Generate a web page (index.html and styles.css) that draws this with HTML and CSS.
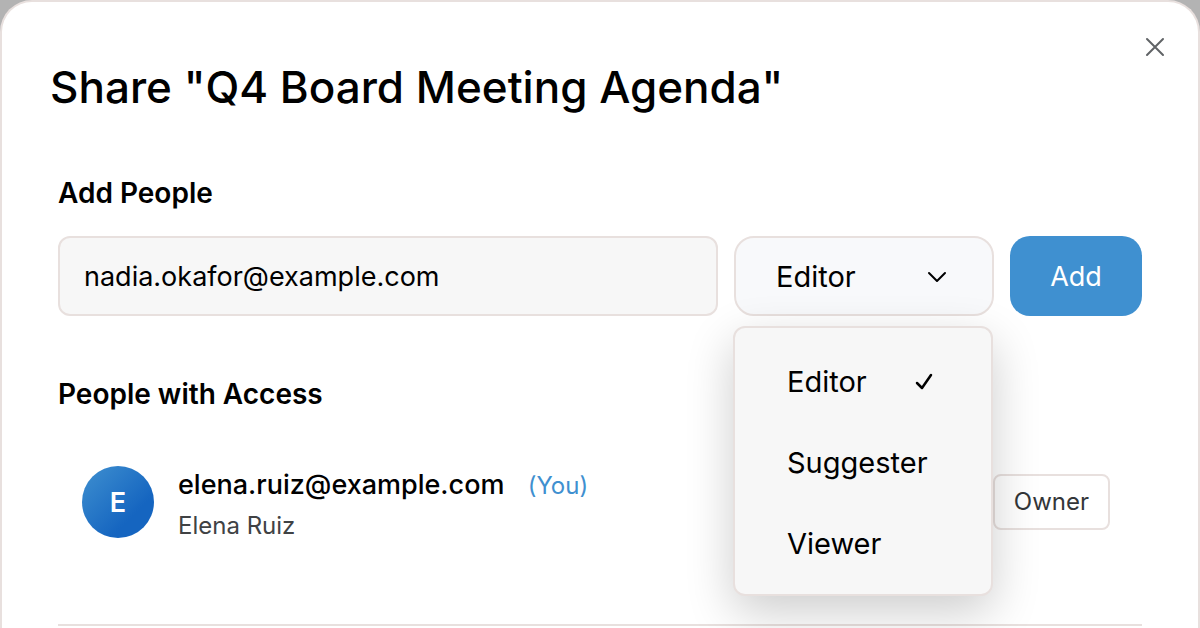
FILE: index.html
```
<!DOCTYPE html>
<html lang="en">
<head>
  <meta charset="utf-8">
  <meta name="viewport" content="width=device-width, initial-scale=1.0">
  <title>Share "Q4 Board Meeting Agenda"</title>
  <link rel="stylesheet" href="styles.css">
</head>
<body>
  <div class="modal" role="dialog" aria-labelledby="shareTitle">
    <button type="button" class="close" aria-label="Close">
      <svg width="20" height="20" viewBox="0 0 20 20"><path d="M2 2L18 18M18 2L2 18"/></svg>
    </button>
    <h1 id="shareTitle">Share "Q4 Board Meeting Agenda"</h1>

    <form class="section">
      <h2><label for="email">Add People</label></h2>
      <div class="add-row">
        <input type="text" id="email" class="email" value="nadia.okafor@example.com">
        <div class="role">
          <select id="role" aria-label="Role">
            <option selected>Editor</option>
            <option>Suggester</option>
            <option>Viewer</option>
          </select>
          <svg class="chevron" width="20" height="12" viewBox="0 0 20 12"><path d="M2 2L10 10L18 2"/></svg>
          <ul class="menu" role="listbox" aria-label="Role options">
            <li role="option" aria-selected="true">
              Editor
              <svg class="check" width="18" height="18" viewBox="0 0 18 18"><path d="M2 10L7 15L16 2"/></svg>
            </li>
            <li role="option">Suggester</li>
            <li role="option">Viewer</li>
          </ul>
        </div>
        <button type="button" class="add">Add</button>
      </div>
    </form>

    <div class="section access">
      <h2>People with Access</h2>
      <div class="person">
        <div class="avatar">E</div>
        <div class="info">
          <div class="person-email">elena.ruiz@example.com <span class="you">(You)</span></div>
          <div class="person-name">Elena Ruiz</div>
        </div>
        <span class="badge">Owner</span>
      </div>
    </div>
  </div>
</body>
</html>
```

FILE: styles.css
```
* {
  box-sizing: border-box;
}
body {
  margin: 0;
  background: #b3b3b3;
  color: #000;
  font-family: Inter, "Liberation Sans", sans-serif;
  font-size: 27px;
}
h1, h2, ul {
  margin: 0;
  padding: 0;
}
input, select, button {
  font-family: inherit;
  color: inherit;
  margin: 0;
}
svg {
  fill: none;
  stroke: currentColor;
  stroke-width: 2;
  stroke-linecap: round;
  stroke-linejoin: round;
}

.modal {
  position: relative;
  min-height: 100vh;
  padding: 57px 56px 0;
  background: #fff;
  border: 2px solid #e8e0de;
  border-bottom: none;
  border-radius: 32px 32px 0 0;
}
.close {
  position: absolute;
  top: 29px;
  right: 27px;
  display: flex;
  padding: 6px;
  background: none;
  border: none;
  color: #606366;
  cursor: pointer;
}
h1 {
  margin-left: -8px;
  font-size: 44px;
  line-height: 56px;
  font-weight: 500;
}
h2 {
  font-size: 28px;
  line-height: 36px;
  font-weight: 600;
}
.section {
  margin-top: 60px;
}

/* Add people */
.add-row {
  display: flex;
  gap: 16px;
  margin-top: 25px;
}
.email {
  flex: 1;
  min-width: 0;
  height: 80px;
  padding: 0 24px;
  background: #f7f7f7;
  border: 2px solid #e8e0de;
  border-radius: 12px;
  font-size: 27px;
}
.role {
  position: relative;
  width: 260px;
}
.role select {
  appearance: none;
  width: 100%;
  height: 80px;
  padding: 0 40px;
  background: #f8f9fb;
  border: 2px solid #e8e0de;
  border-radius: 20px;
  font-size: 29px;
}
.chevron {
  position: absolute;
  top: 35px;
  right: 47px;
  pointer-events: none;
}
.menu {
  position: absolute;
  top: 90px;
  left: -1px;
  z-index: 1;
  width: 100%;
  padding: 13px 58px 10px 52px;
  background: #f7f7f7;
  border: 2px solid #e8e0de;
  border-radius: 12px;
  box-shadow: 0 16px 48px rgba(0, 0, 0, 0.2);
  list-style: none;
}
.menu li {
  display: flex;
  align-items: center;
  justify-content: space-between;
  height: 81px;
  font-size: 29px;
}
.check {
  stroke-width: 2.5;
}
.add {
  width: 132px;
  height: 80px;
  background: #3f90d0;
  border: none;
  border-radius: 20px;
  color: #fff;
  font-size: 27px;
  cursor: pointer;
}

/* People list */
.access {
  padding-bottom: 40px;
  border-bottom: 2px solid #e8e0de;
}
.person {
  display: flex;
  align-items: flex-start;
  gap: 24px;
  margin-top: 30px;
  padding: 24px 32px 37px 24px;
}
.avatar {
  display: flex;
  align-items: center;
  justify-content: center;
  width: 72px;
  height: 72px;
  border-radius: 50%;
  background: linear-gradient(135deg, #3f90d0 0%, #1565c0 70%);
  color: #fff;
  font-weight: 600;
}
.info {
  flex: 1;
}
.person-email {
  line-height: 38px;
  font-weight: 500;
}
.you {
  margin-left: 16px;
  color: #3f90d0;
  font-size: 24px;
  font-weight: 400;
}
.person-name {
  color: #404244;
  font-size: 24px;
  line-height: 42px;
}
.badge {
  margin-top: 8px;
  padding: 8px 19px;
  border: 2px solid #e8e0de;
  border-radius: 8px;
  color: #333639;
  font-size: 24px;
  line-height: 36px;
}
```
